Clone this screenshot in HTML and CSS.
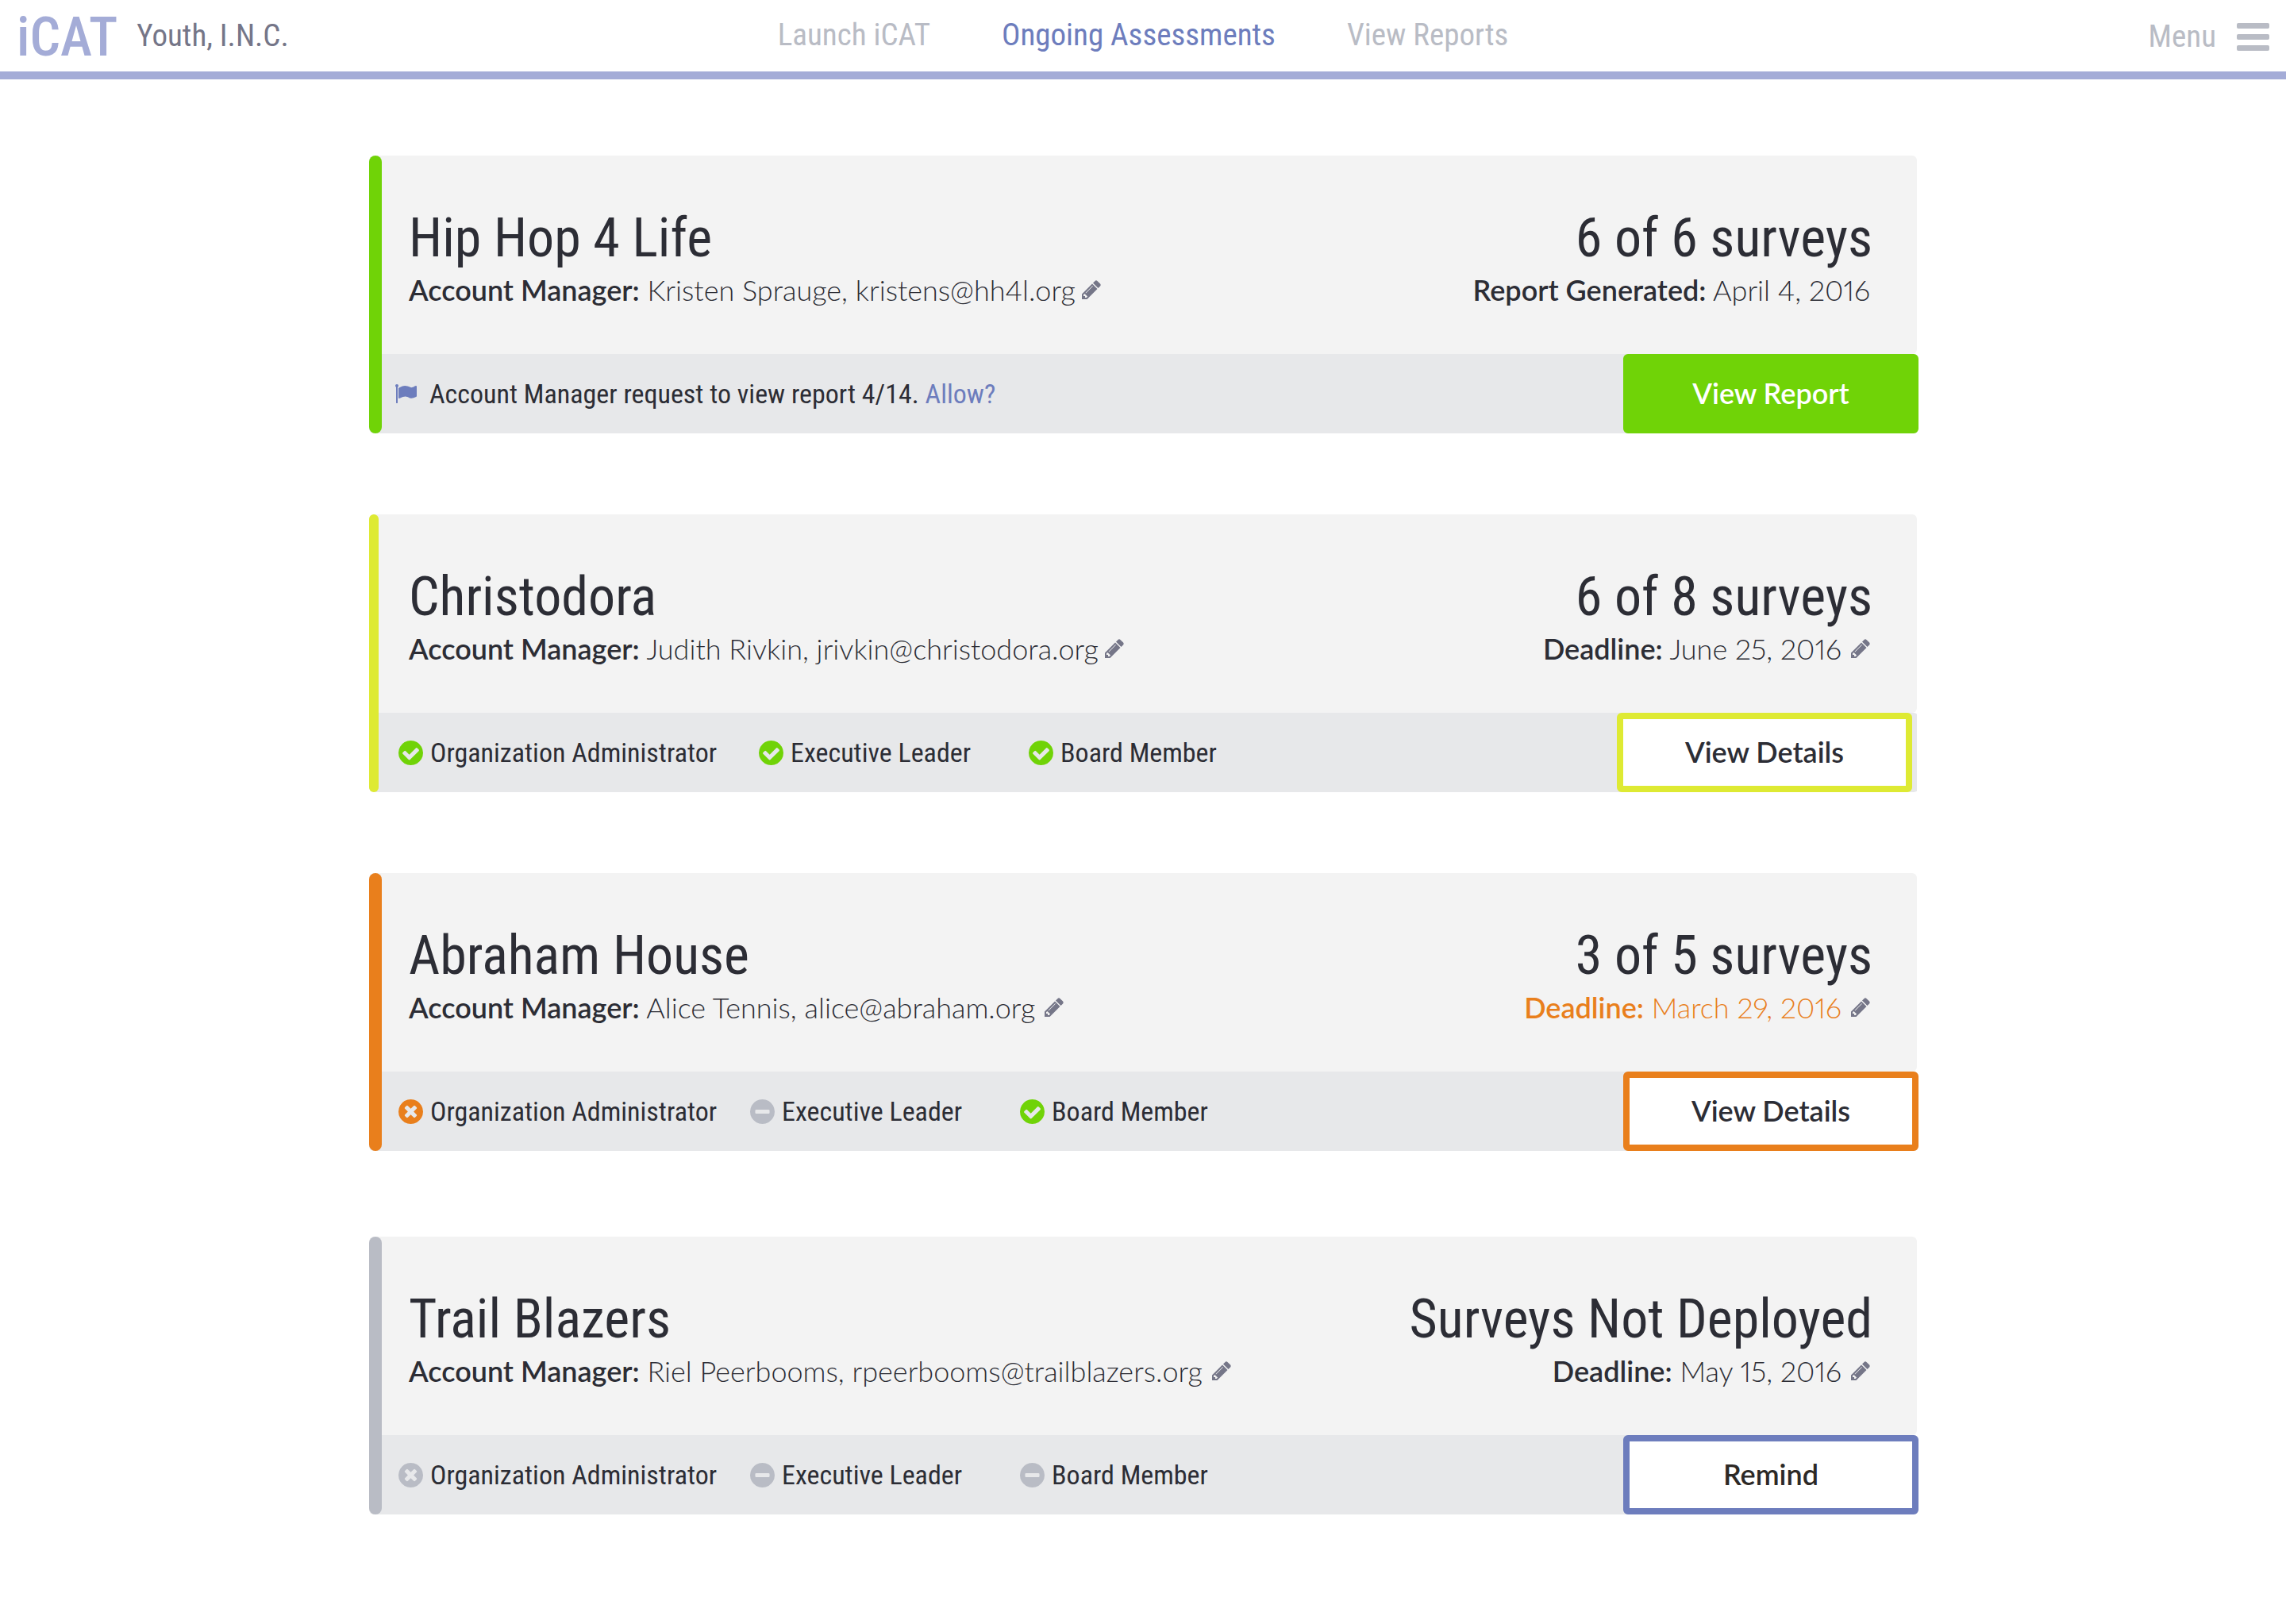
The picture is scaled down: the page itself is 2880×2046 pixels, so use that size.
FILE: index.html
```html
<!DOCTYPE html>
<html lang="en">
<head>
<meta charset="utf-8">
<meta name="viewport" content="width=device-width, initial-scale=1">
<title>iCAT – Ongoing Assessments</title>
<link rel="stylesheet" href="styles.css">
</head>
<body>
<svg class="sprite" aria-hidden="true">
  <symbol id="pencil" viewBox="128 128 1536 1536"><path d="M491 1536l91-91-235-235-91 91v107h128v128h107zm523-928q0-22-22-22-10 0-17 7l-542 542q-7 7-7 17 0 22 22 22 10 0 17-7l542-542q7-7 7-17zm-54-192l416 416-832 832h-416v-416zm683 96q0 53-37 90l-166 166-416-416 166-165q36-38 90-38 53 0 91 38l235 234q37 39 37 91z"/></symbol>
  <symbol id="check" viewBox="128 128 1536 1536"><path d="M1412 734q0-28-18-46l-91-90q-19-19-45-19t-45 19l-408 407-226-226q-19-19-45-19t-45 19l-91 90q-18 18-18 46 0 27 18 45l362 362q19 19 45 19 27 0 46-19l543-543q18-18 18-45zm252 162q0 209-103 385.5t-279.5 279.5-385.5 103-385.5-103-279.5-279.5-103-385.5 103-385.5 279.5-279.5 385.5-103 385.5 103 279.5 279.5 103 385.5z"/></symbol>
  <symbol id="cross" viewBox="128 128 1536 1536"><path d="M1277 1122q0-26-19-45l-181-181 181-181q19-19 19-45 0-27-19-46l-90-90q-19-19-46-19-26 0-45 19l-181 181-181-181q-19-19-45-19-27 0-46 19l-90 90q-19 19-19 46 0 26 19 45l181 181-181 181q-19 19-19 45 0 27 19 46l90 90q19 19 46 19 26 0 45-19l181-181 181 181q19 19 45 19 27 0 46-19l90-90q19-19 19-46zm387-226q0 209-103 385.5t-279.5 279.5-385.5 103-385.5-103-279.5-279.5-103-385.5 103-385.5 279.5-279.5 385.5-103 385.5 103 279.5 279.5 103 385.5z"/></symbol>
  <symbol id="minus" viewBox="128 128 1536 1536"><path d="M1344 960v-128q0-26-19-45t-45-19h-768q-26 0-45 19t-19 45v128q0 26 19 45t45 19h768q26 0 45-19t19-45zm320-64q0 209-103 385.5t-279.5 279.5-385.5 103-385.5-103-279.5-279.5-103-385.5 103-385.5 279.5-279.5 385.5-103 385.5 103 279.5 279.5 103 385.5z"/></symbol>
  <symbol id="flag" viewBox="64 128 1728 1536"><path d="M320 256q0 72-64 110v1266q0 13-9.500 22.500t-22.500 9.500h-64q-13 0-22.500-9.500t-9.500-22.500v-1266q-64-38-64-110 0-53 37.500-90.500t90.500-37.500 90.500 37.500 37.500 90.500zm1472 64v763q0 25-12.500 38.500t-39.500 27.500q-215 116-369 116-61 0-123.500-22t-108.500-48-115.500-48-142.500-22q-192 0-464 146-17 9-33 9-26 0-45-19t-19-45v-742q0-32 31-55 21-14 79-43 236-120 421-120 107 0 200 29t219 88q38 19 88 19 54 0 117.500-21t110-47 88-47 54.500-21q26 0 45 19t19 45z"/></symbol>
  <symbol id="bars" viewBox="0 0 41 35"><rect width="41" height="7" rx="2"/><rect y="14" width="41" height="7" rx="2"/><rect y="28" width="41" height="7" rx="2"/></symbol>
</svg>

<header class="topbar">
  <div class="brand">
    <a class="logo" href="#">iCAT</a>
    <span class="org">Youth, I.N.C.</span>
  </div>
  <nav class="nav">
    <a href="#">Launch iCAT</a>
    <a class="current" href="#" aria-current="page">Ongoing Assessments</a>
    <a href="#">View Reports</a>
  </nav>
  <button class="menu" type="button">Menu <svg class="bars"><use href="#bars"/></svg></button>
</header>

<main class="cards">
  <article class="card green">
    <div class="panel">
      <div>
        <h2>Hip Hop 4 Life</h2>
        <p class="meta tight"><span><b>Account Manager:</b> Kristen Sprauge, kristens@hh4l.org</span><button class="edit" type="button" aria-label="Edit manager"><svg><use href="#pencil"/></svg></button></p>
      </div>
      <div class="status">
        <h2>6 of 6 surveys</h2>
        <p class="meta"><span><b>Report Generated:</b> April 4, 2016</span></p>
      </div>
    </div>
    <div class="strip">
      <p class="request"><svg class="flag"><use href="#flag"/></svg><span>Account Manager request to view report 4/14. <a href="#">Allow?</a></span></p>
      <button class="action filled" type="button">View Report</button>
    </div>
  </article>

  <article class="card yellow">
    <div class="panel">
      <div>
        <h2>Christodora</h2>
        <p class="meta tight"><span><b>Account Manager:</b> Judith Rivkin, jrivkin@christodora.org</span><button class="edit" type="button" aria-label="Edit manager"><svg><use href="#pencil"/></svg></button></p>
      </div>
      <div class="status">
        <h2>6 of 8 surveys</h2>
        <p class="meta"><span><b>Deadline:</b> June 25, 2016</span><button class="edit" type="button" aria-label="Edit deadline"><svg><use href="#pencil"/></svg></button></p>
      </div>
    </div>
    <div class="strip">
      <ul class="roles">
        <li><svg class="done"><use href="#check"/></svg>Organization Administrator</li>
        <li><svg class="done"><use href="#check"/></svg>Executive Leader</li>
        <li><svg class="done"><use href="#check"/></svg>Board Member</li>
      </ul>
      <button class="action" type="button">View Details</button>
    </div>
  </article>

  <article class="card orange">
    <div class="panel">
      <div>
        <h2>Abraham House</h2>
        <p class="meta"><span><b>Account Manager:</b> Alice Tennis, alice@abraham.org</span><button class="edit" type="button" aria-label="Edit manager"><svg><use href="#pencil"/></svg></button></p>
      </div>
      <div class="status">
        <h2>3 of 5 surveys</h2>
        <p class="meta late"><span><b>Deadline:</b> March 29, 2016</span><button class="edit" type="button" aria-label="Edit deadline"><svg><use href="#pencil"/></svg></button></p>
      </div>
    </div>
    <div class="strip">
      <ul class="roles">
        <li><svg class="missed"><use href="#cross"/></svg>Organization Administrator</li>
        <li><svg><use href="#minus"/></svg>Executive Leader</li>
        <li><svg class="done"><use href="#check"/></svg>Board Member</li>
      </ul>
      <button class="action" type="button">View Details</button>
    </div>
  </article>

  <article class="card idle">
    <div class="panel">
      <div>
        <h2>Trail Blazers</h2>
        <p class="meta"><span><b>Account Manager:</b> Riel Peerbooms, rpeerbooms@trailblazers.org</span><button class="edit" type="button" aria-label="Edit manager"><svg><use href="#pencil"/></svg></button></p>
      </div>
      <div class="status">
        <h2>Surveys Not Deployed</h2>
        <p class="meta"><span><b>Deadline:</b> May 15, 2016</span><button class="edit" type="button" aria-label="Edit deadline"><svg><use href="#pencil"/></svg></button></p>
      </div>
    </div>
    <div class="strip">
      <ul class="roles">
        <li><svg><use href="#cross"/></svg>Organization Administrator</li>
        <li><svg><use href="#minus"/></svg>Executive Leader</li>
        <li><svg><use href="#minus"/></svg>Board Member</li>
      </ul>
      <button class="action remind" type="button">Remind</button>
    </div>
  </article>
</main>
</body>
</html>
```

FILE: styles.css
```css
:root {
  --ink: #2c2d35;
  --slate: #757688;
  --gray: #b9bcc5;
  --blue: #6d7dbd;
  --lavender: #a4acd7;
  --green: #70d307;
  --yellow: #deea33;
  --orange: #e97f1c;
  --narrow: "Roboto Condensed", Roboto, sans-serif;
  --body: Lato, sans-serif;
}

* { box-sizing: border-box; }

body {
  margin: 0;
  background: #fff;
  color: var(--ink);
  font-family: var(--narrow);
  font-size: 34px;
}

h2, p, ul { margin: 0; padding: 0; }
ul { list-style: none; }
a { color: inherit; text-decoration: none; }
button { font: inherit; color: inherit; border: 0; padding: 0; background: none; cursor: pointer; }
svg { display: block; flex: none; fill: currentColor; }
.sprite { position: absolute; width: 0; height: 0; }

.topbar {
  display: grid;
  grid-template-columns: 1fr auto 1fr;
  align-items: center;
  height: 100px;
  padding: 0 21px;
  border-bottom: 10px solid var(--lavender);
  color: var(--gray);
  font-size: 39px;
}
.brand { display: flex; align-items: center; gap: 24px; }
.logo { padding-top: 4px; color: var(--lavender); font-size: 68px; font-weight: 500; line-height: 80px; }
.org { color: var(--slate); }
.nav { display: flex; gap: 90px; padding-bottom: 2px; }
.current { color: var(--blue); }
.menu { display: flex; align-items: center; justify-content: flex-end; gap: 26px; padding-top: 2px; }
.bars { width: 41px; height: 35px; }

.cards {
  display: grid;
  gap: 102px;
  max-width: 1950px;
  margin: 96px auto;
}
.card { position: relative; --accent: var(--gray); --stripe: 16px; }
.card::before {
  content: "";
  position: absolute;
  inset: 0 auto 0 0;
  width: var(--stripe);
  border-radius: 8px;
  background: var(--accent);
}
.green { --accent: var(--green); }
.yellow { --accent: var(--yellow); --stripe: 12px; }
.orange { --accent: var(--orange); }
.idle { margin-top: 6px; }

.panel {
  display: flex;
  justify-content: space-between;
  min-height: 250px;
  padding: 64px 56px 36px 50px;
  border-radius: 6px;
  background: #f3f3f3;
}
h2 { font-size: 68px; font-weight: 400; line-height: 80px; }
.status { text-align: right; }
.status .meta { justify-content: flex-end; padding-right: 3px; }
.meta {
  display: flex;
  align-items: center;
  gap: 12px;
  font-family: var(--body);
  font-size: 36px;
  font-weight: 300;
  font-variant-numeric: proportional-nums;
  line-height: 50px;
}
.meta b { font-weight: 600; }
.tight { gap: 8px; }
.late span { color: var(--orange); }
.edit { color: var(--slate); }
.edit svg { width: 24px; height: 24px; }

.strip {
  display: flex;
  justify-content: space-between;
  align-items: center;
  height: 100px;
  margin-right: -2px;
  border-radius: 6px;
  background: linear-gradient(#e7e8ea, #e7e8ea) no-repeat 0 0 / calc(100% - 2px) 100%;
}
.request { display: flex; align-items: center; gap: 16px; padding-left: 33px; }
.request a { color: var(--blue); }
.flag { width: 27px; height: 24px; color: var(--blue); }
.roles { display: grid; grid-template-columns: 443px 340px auto; padding-left: 37px; }
.yellow .roles { grid-template-columns: 454px 340px auto; }
.roles li { display: flex; align-items: center; gap: 9px; }
.roles svg { width: 31px; height: 31px; color: var(--gray); }
.roles .done { color: var(--green); }
.roles .missed { color: var(--orange); }

.action {
  width: 372px;
  height: 100px;
  padding-bottom: 2px;
  border: 8px solid var(--accent);
  border-radius: 6px;
  background: #fff;
  font-family: var(--body);
  font-size: 36px;
  font-weight: 600;
}
.yellow .action { margin-right: 8px; }
.filled { background: var(--accent); color: #fff; }
.remind { border-color: var(--blue); color: #2d2926; }
```
